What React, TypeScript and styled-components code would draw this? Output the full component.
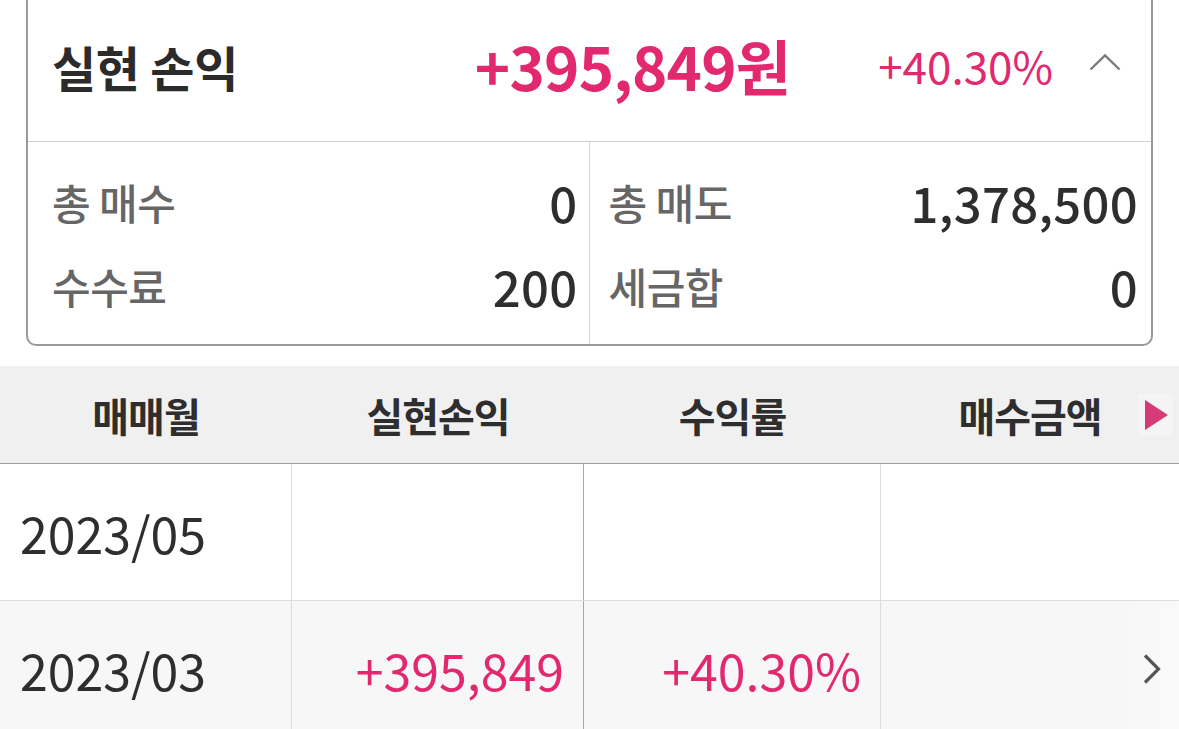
import React from 'react';
import styled, { createGlobalStyle } from 'styled-components';

const GlobalStyle = createGlobalStyle`
  html, body {
    margin: 0;
    padding: 0;
    background: #ffffff;
  }
  body {
    font-family: "Noto Sans CJK KR", "Noto Sans", sans-serif;
    color: #333;
    width: 1179px;
    overflow: hidden;
  }
`;

const PINK = '#e2286f';

const Page = styled.div`
  width: 1179px;
  height: 729px;
  overflow: hidden;
  background: #fff;
`;

const Card = styled.div`
  margin: 0 26px;
  border: 2px solid #9a9a9a;
  border-top: none;
  border-radius: 0 0 10px 10px;
  background: #fff;
`;

const CardHeader = styled.div`
  display: flex;
  align-items: center;
  height: 141px;
  padding: 0 30px 0 24px;
  border-bottom: 1px solid #cfcfcf;
`;

const Title = styled.div`
  flex: 1;
  font-size: 48px;
  font-weight: 700;
  color: #2b2b2b;
  letter-spacing: -0.3px;
  margin-top: -10px;
`;

const Amount = styled.div`
  font-size: 60px;
  font-weight: 700;
  color: ${PINK};
  letter-spacing: -0.8px;
  margin-top: -12px;
`;

const Rate = styled.div`
  font-size: 44px;
  font-weight: 400;
  color: ${PINK};
  margin-left: 88px;
  margin-top: -12px;
`;

const ToggleIcon = styled.div`
  display: flex;
  margin-left: 36px;
  margin-top: -18px;
`;

const Summary = styled.div`
  display: grid;
  grid-template-columns: 1fr 1fr;
`;

const SummaryCol = styled.div<{ $first?: boolean }>`
  display: flex;
  flex-direction: column;
  padding: 17px ${p => (p.$first ? '11px' : '13px')} 17px ${p => (p.$first ? '24px' : '19px')};
  border-right: ${p => (p.$first ? '1px solid #d6d6d6' : 'none')};
`;

const SummaryRow = styled.div`
  display: flex;
  align-items: center;
  justify-content: space-between;
  height: 84px;
`;

const Label = styled.span`
  font-size: 42px;
  font-weight: 500;
  color: #666;
  letter-spacing: -0.5px;
`;

const Value = styled.span`
  font-size: 49px;
  font-weight: 500;
  color: #2e2e2e;
  letter-spacing: 0.3px;
`;

const Table = styled.div`
  position: relative;
  margin-top: 20px;
`;

const HeaderRow = styled.div`
  display: grid;
  grid-template-columns: 292px 292px 297px 1fr;
  height: 97px;
  background: #f0f0f0;
  border-bottom: 1px solid #9c9c9c;
`;

const HeadCell = styled.div`
  display: flex;
  align-items: center;
  justify-content: center;
  font-size: 40px;
  font-weight: 700;
  color: #2e2e2e;
  letter-spacing: -1px;
  position: relative;
`;

const MoreMark = styled.div`
  position: absolute;
  right: 6px;
  top: 28px;
  width: 35px;
  height: 42px;
  display: flex;
  align-items: center;
  justify-content: center;
  background: rgba(255, 255, 255, 0.3);
`;

const BodyRow = styled.div<{ $alt?: boolean }>`
  display: grid;
  grid-template-columns: 292px 292px 297px 1fr;
  height: 136px;
  background: ${p => (p.$alt ? '#f7f7f7' : '#fff')};
  border-bottom: 1px solid #dedede;
`;

const Cell = styled.div<{ $align?: 'left' | 'right'; $border?: 'light' | 'dark' | 'none'; $pink?: boolean }>`
  display: flex;
  align-items: center;
  justify-content: ${p => (p.$align === 'left' ? 'flex-start' : 'flex-end')};
  padding: ${p => (p.$align === 'left' ? '0 0 0 20px' : '0 19px 0 0')};
  font-size: 50px;
  font-weight: 400;
  color: ${p => (p.$pink ? PINK : '#2e2e2e')};
  border-right: ${p =>
    p.$border === 'dark' ? '1px solid #a8a8a8' : p.$border === 'light' ? '1px solid #dcdcdc' : 'none'};
  position: relative;
`;

const ScrollHint = styled.div`
  position: absolute;
  right: 0;
  top: 0;
  bottom: 0;
  width: 54px;
  padding-left: 6px;
  display: flex;
  align-items: center;
  justify-content: center;
  background: linear-gradient(to right, rgba(255, 255, 255, 0), rgba(255, 255, 255, 0.35));
`;

type Row = { month: string; profit?: string; rate?: string; buy?: string };

const rows: Row[] = [
  { month: '2023/05' },
  { month: '2023/03', profit: '+395,849', rate: '+40.30%' },
];

export default function App() {
  return (
    <Page>
      <GlobalStyle />
      <Card>
        <CardHeader>
          <Title>실현 손익</Title>
          <Amount>+395,849원</Amount>
          <Rate>+40.30%</Rate>
          <ToggleIcon>
            <svg width="32" height="18" viewBox="0 0 32 18">
              <polyline points="1.5,16.5 16,2.5 30.5,16.5" fill="none" stroke="#7a7a7a" strokeWidth="2.4" />
            </svg>
          </ToggleIcon>
        </CardHeader>
        <Summary>
          <SummaryCol $first>
            <SummaryRow>
              <Label>총 매수</Label>
              <Value>0</Value>
            </SummaryRow>
            <SummaryRow>
              <Label>수수료</Label>
              <Value>200</Value>
            </SummaryRow>
          </SummaryCol>
          <SummaryCol>
            <SummaryRow>
              <Label>총 매도</Label>
              <Value>1,378,500</Value>
            </SummaryRow>
            <SummaryRow>
              <Label>세금합</Label>
              <Value>0</Value>
            </SummaryRow>
          </SummaryCol>
        </Summary>
      </Card>

      <Table>
        <HeaderRow>
          <HeadCell>매매월</HeadCell>
          <HeadCell>실현손익</HeadCell>
          <HeadCell>수익률</HeadCell>
          <HeadCell>
            매수금액
            <MoreMark>
              <svg width="24" height="30" viewBox="0 0 24 30">
                <polygon points="1,0 24,15 1,30" fill="#d63a77" />
              </svg>
            </MoreMark>
          </HeadCell>
        </HeaderRow>
        {rows.map((r, i) => (
          <BodyRow key={r.month} $alt={i % 2 === 1}>
            <Cell $align="left" $border="light">{r.month}</Cell>
            <Cell $border="dark" $pink>{r.profit}</Cell>
            <Cell $border="light" $pink>{r.rate}</Cell>
            <Cell>
              {r.buy}
              {r.profit && (
                <ScrollHint>
                  <svg width="20" height="32" viewBox="0 0 20 32">
                    <polyline points="3,2.5 16.5,16 3,29.5" fill="none" stroke="#555" strokeWidth="3.2" />
                  </svg>
                </ScrollHint>
              )}
            </Cell>
          </BodyRow>
        ))}
      </Table>
    </Page>
  );
}
